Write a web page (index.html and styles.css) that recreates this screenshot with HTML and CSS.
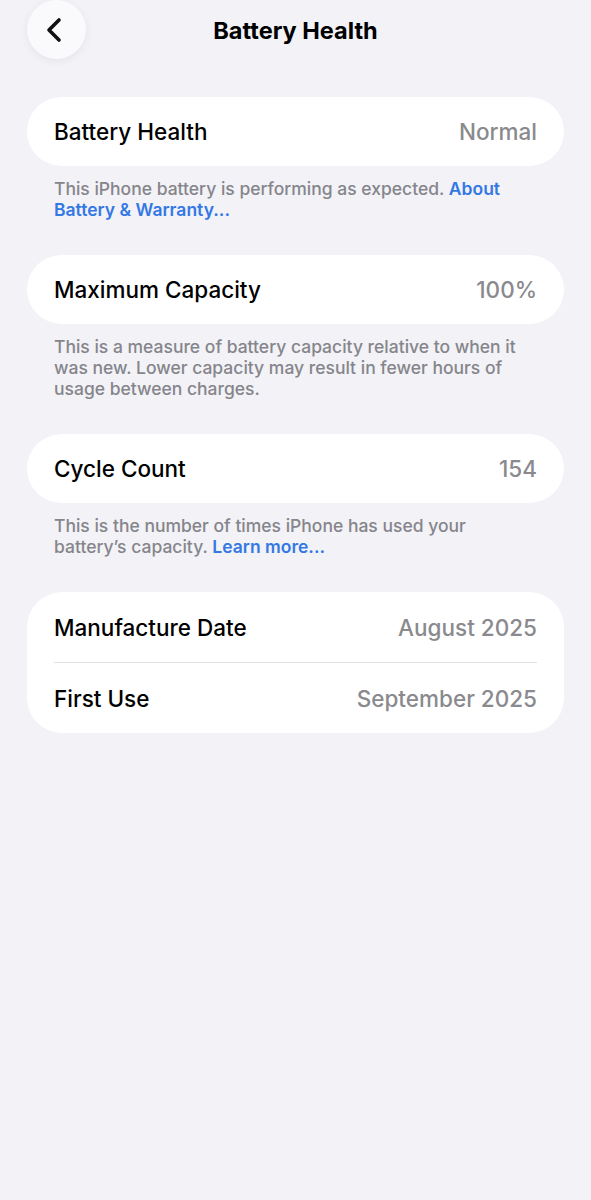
FILE: index.html
```html
<!DOCTYPE html>
<html lang="en">
<head>
    <meta charset="UTF-8">
    <meta name="viewport" content="width=device-width, initial-scale=1.0">
    <title>Battery Health</title>
    <link rel="stylesheet" href="styles.css">
</head>
<body>
    <header class="nav">
        <button class="back" aria-label="Back">
            <svg width="22" height="26" viewBox="0 0 22 26">
                <path d="M15 3 L5 13 L15 23" fill="none" stroke="#111" stroke-width="3.6" stroke-linecap="round" stroke-linejoin="round"/>
            </svg>
        </button>
        <h1>Battery Health</h1>
    </header>

    <main>
        <!-- health -->
        <section class="group">
            <div class="card">
                <div class="row">
                    <span class="label">Battery Health</span>
                    <span class="value">Normal</span>
                </div>
            </div>
            <p class="note">This iPhone battery is performing as expected. <a href="#">About Battery &amp; Warranty...</a></p>
        </section>

        <!-- capacity -->
        <section class="group">
            <div class="card">
                <div class="row">
                    <span class="label">Maximum Capacity</span>
                    <span class="value">100%</span>
                </div>
            </div>
            <p class="note">This is a measure of battery capacity relative to when it was new. Lower capacity may result in fewer hours of usage between charges.</p>
        </section>

        <!-- cycles -->
        <section class="group">
            <div class="card">
                <div class="row">
                    <span class="label">Cycle Count</span>
                    <span class="value">154</span>
                </div>
            </div>
            <p class="note">This is the number of times iPhone has used your battery’s capacity. <a href="#">Learn more...</a></p>
        </section>

        <!-- dates -->
        <section class="group">
            <div class="card">
                <div class="row tall">
                    <span class="label">Manufacture Date</span>
                    <span class="value">August 2025</span>
                </div>
                <div class="row tall">
                    <span class="label">First Use</span>
                    <span class="value">September 2025</span>
                </div>
            </div>
        </section>
    </main>
</body>
</html>
```

FILE: styles.css
```css
body {
    font-family: Inter, "Noto Sans", sans-serif;
    background-color: #f2f2f7;
    color: #000;
    margin: 0;
    padding: 0;
    min-height: 1200px;
}

.nav {
    position: relative;
    height: 60px;
    display: flex;
    align-items: center;
    justify-content: center;
}

.back {
    position: absolute;
    left: 27px;
    top: 0;
    width: 59px;
    height: 59px;
    border: none;
    border-radius: 50%;
    background-color: #fafafc;
    box-shadow: 0 2px 10px rgba(0, 0, 0, 0.06);
    display: flex;
    align-items: center;
    justify-content: center;
    padding: 0 3px 0 0;
}

h1 {
    margin: 0;
    font-size: 23.5px;
    font-weight: 700;
    letter-spacing: 0;
}

main {
    padding: 37px 27px 0;
}

.group {
    margin-bottom: 35px;
}

.card {
    background-color: #fff;
    border-radius: 35px;
    padding: 0 27px;
}

.row {
    height: 69px;
    display: flex;
    align-items: center;
    justify-content: space-between;
}

.row.tall {
    height: 70px;
}

.row + .row {
    border-top: 1px solid #e2e2e6;
}

.label {
    font-size: 22.5px;
    font-weight: 500;
}

.value {
    font-size: 22.5px;
    font-weight: 500;
    color: #8a8a8e;
}

.note {
    margin: 12px 27px 0;
    font-size: 17.5px;
    font-weight: 500;
    line-height: 21px;
    color: #85858b;
}

.note a {
    color: #3478e4;
    font-weight: 600;
    text-decoration: none;
}
```
